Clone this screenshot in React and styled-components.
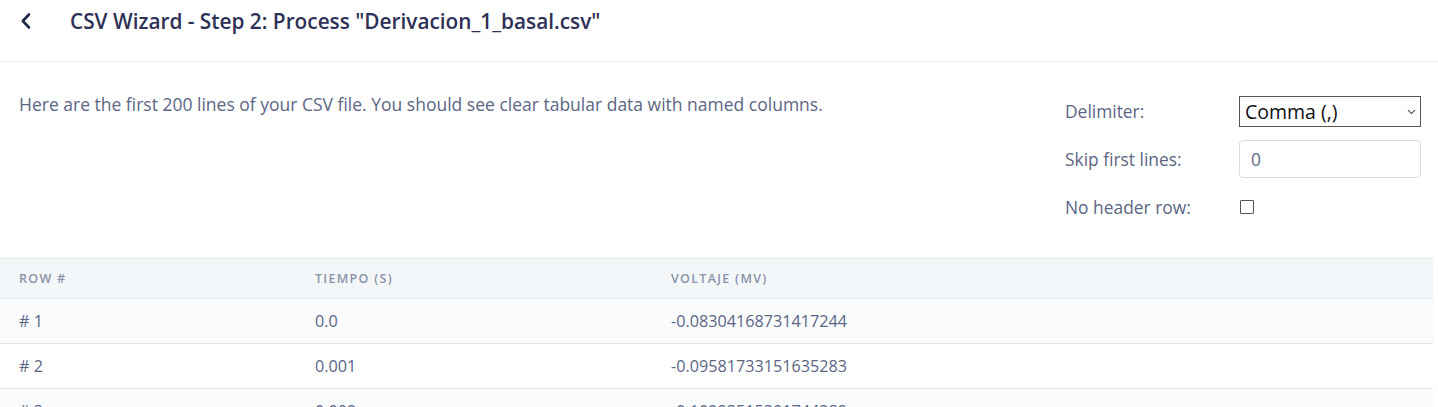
import React from "react";
import styled, { createGlobalStyle } from "styled-components";

const GlobalStyle = createGlobalStyle`
  body {
    margin: 0;
    background: #fff;
    font-family: "Open Sans", "Noto Sans", sans-serif;
  }
`;

const rows = [
  ["# 1", "0.0", "-0.08304168731417244"],
  ["# 2", "0.001", "-0.09581733151635283"],
  ["# 3", "0.002", "-0.10293515301744389"],
];

function App() {
  return (
    <Page>
      <GlobalStyle />
      <Header>
        <BackButton>
          <svg width="12" height="18" viewBox="0 0 12 18" fill="none">
            <path d="M9 2.5L2.8 9L9 15.5" stroke="#1f2a4a" strokeWidth="2.6" strokeLinecap="round" strokeLinejoin="round" />
          </svg>
        </BackButton>
        <Title>CSV Wizard - Step 2: Process "Derivacion_1_basal.csv"</Title>
      </Header>
      <Intro>
        <Description>
          Here are the first 200 lines of your CSV file. You should see clear tabular data with named columns.
        </Description>
        <Form>
          <Label>Delimiter:</Label>
          <SelectWrap>
            <Select defaultValue="comma">
              <option value="comma">Comma (,)</option>
              <option value="semicolon">Semicolon (;)</option>
              <option value="tab">Tab</option>
            </Select>
            <Caret width="9" height="6" viewBox="0 0 9 6" fill="none">
              <path d="M1 1.2L4.5 4.6L8 1.2" stroke="#444" strokeWidth="1.1" />
            </Caret>
          </SelectWrap>
          <Label>Skip first lines:</Label>
          <Input defaultValue="0" />
          <Label>No header row:</Label>
          <Check type="checkbox" />
        </Form>
      </Intro>
      <Table>
        <thead>
          <tr>
            <Th>Row #</Th>
            <Th>Tiempo (s)</Th>
            <Th>Voltaje (mV)</Th>
            <Th />
          </tr>
        </thead>
        <tbody>
          {rows.map((r, i) => (
            <Tr key={i} $odd={i % 2 === 0}>
              <Td>{r[0]}</Td>
              <Td>{r[1]}</Td>
              <Td>{r[2]}</Td>
              <Td />
            </Tr>
          ))}
        </tbody>
      </Table>
    </Page>
  );
}

export default App;

const Page = styled.div`
  width: 100%;
  height: 407px;
  overflow: hidden;
`;

const Header = styled.div`
  height: 62px;
  display: flex;
  align-items: flex-start;
  border-bottom: 1px solid #eceef1;
  box-sizing: border-box;
  padding: 7px 0 0 20px;
`;

const BackButton = styled.div`
  width: 12px;
  height: 18px;
  display: flex;
  margin-top: 5px;
`;

const Title = styled.h1`
  margin: 0 0 0 38px;
  font-size: 20.8px;
  line-height: 28px;
  font-weight: 600;
  color: #2e3157;
`;

const Intro = styled.div`
  display: flex;
  justify-content: space-between;
  padding: 30px 17px 0 19px;
  height: 196px;
  box-sizing: border-box;
`;

const Description = styled.p`
  margin: 0;
  font-size: 17.5px;
  line-height: 24px;
  color: #5b6684;
`;

const Form = styled.div`
  display: grid;
  grid-template-columns: 174px 182px;
  grid-template-rows: 38px 38px 38px;
  row-gap: 10px;
  align-items: center;
`;

const Label = styled.label`
  font-size: 17.4px;
  color: #5b6684;
`;

const SelectWrap = styled.div`
  position: relative;
  width: 182px;
  height: 31px;
`;

const Select = styled.select`
  appearance: none;
  height: 31px;
  width: 182px;
  font-family: "Open Sans", "Noto Sans", sans-serif;
  font-size: 19.5px;
  color: #111;
  border: 1px solid #555;
  border-radius: 0;
  background: #fff;
  padding: 0 0 0 5px;
`;

const Caret = styled.svg`
  position: absolute;
  right: 5px;
  top: 13px;
  pointer-events: none;
`;

const Input = styled.input`
  height: 38px;
  width: 182px;
  box-sizing: border-box;
  border: 1px solid #d6dce4;
  border-radius: 4px;
  padding: 0 11px;
  font-family: "Open Sans", "Noto Sans", sans-serif;
  font-size: 17.4px;
  color: #5b6684;
`;

const Check = styled.input`
  appearance: none;
  width: 14px;
  height: 14px;
  margin: 0 0 0 1px;
  border: 1px solid #555;
  border-radius: 1px;
  background: #fff;
`;

const Table = styled.table`
  width: 1433px;
  border-collapse: collapse;
  border-top: 1px solid #e3e7ec;
`;

const Th = styled.th`
  text-align: left;
  height: 39px;
  padding: 0 19px;
  background: #f4f7fa;
  border-bottom: 1px solid #e3e7ec;
  font-size: 12.5px;
  font-weight: 600;
  letter-spacing: 1.3px;
  text-transform: uppercase;
  color: #8a93a8;
  &:nth-child(1) { width: 258px; }
  &:nth-child(2) { width: 318px; }
  &:nth-child(3) { width: 400px; }
`;

const Tr = styled.tr`
  background: ${(p) => (p.$odd ? "#fafbfd" : "#fff")};
`;

const Td = styled.td`
  height: 44px;
  padding: 0 19px;
  border-bottom: 1px solid #e3e7ec;
  font-size: 16.2px;
  color: #5b6684;
`;
